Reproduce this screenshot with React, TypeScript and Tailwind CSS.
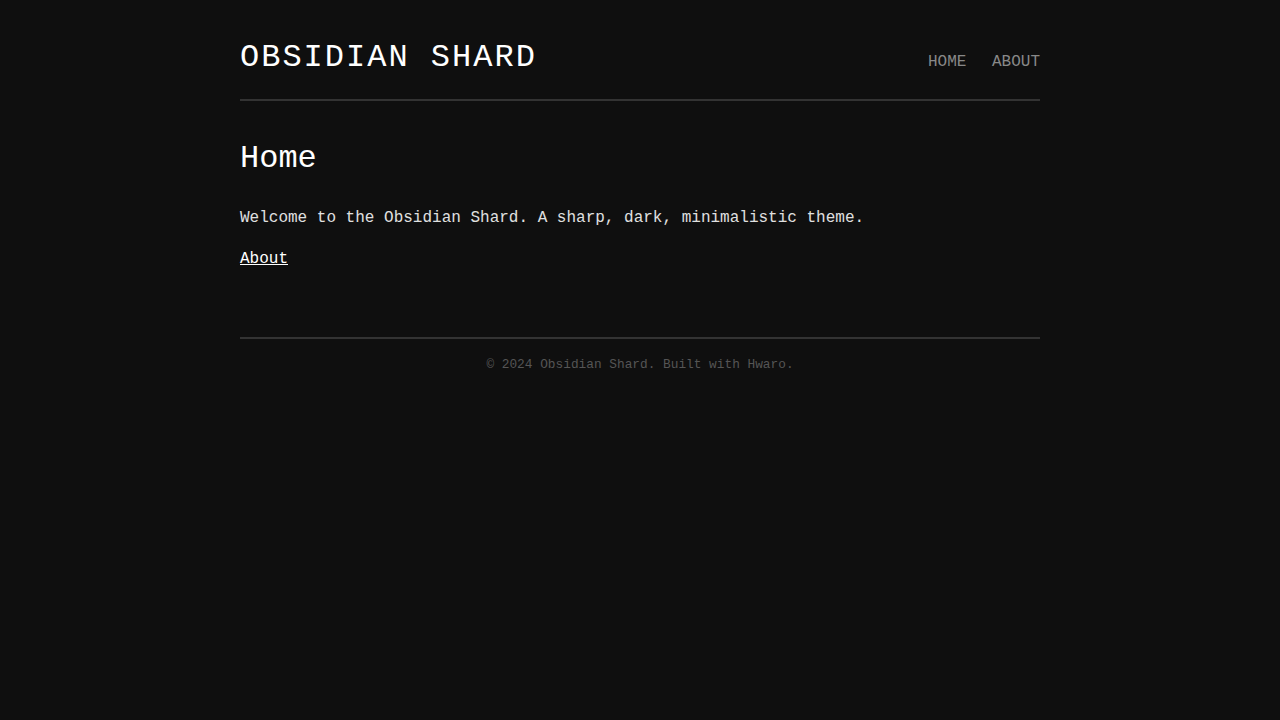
export default function App() {
  return (
    <div
      className="min-h-screen bg-[#0f0f0f] text-[#e0e0e0]"
      style={{ fontFamily: '"Liberation Mono", "DejaVu Sans Mono", monospace' }}
    >
      <div className="mx-auto w-[800px] pt-[34px]">
        <header className="flex items-baseline justify-between border-b-2 border-[#333] pb-[17px]">
          <a href="#" className="text-[32px] leading-[1.5] tracking-[2px] text-white">
            OBSIDIAN SHARD
          </a>
          <nav className="flex gap-[25.6px] text-base text-[#888]">
            <a href="#">HOME</a>
            <a href="#">ABOUT</a>
          </nav>
        </header>

        <main className="pt-[39px] pb-[64px]">
          <h1 className="mb-[28px] text-[32px] leading-[1.2] text-white">Home</h1>
          <p className="mb-[15px] text-base leading-[1.6]">
            Welcome to the Obsidian Shard. A sharp, dark, minimalistic theme.
          </p>
          <p className="text-base leading-[1.6]">
            <a href="#" className="text-white underline">
              About
            </a>
          </p>
        </main>

        <footer className="border-t-2 border-[#333] pt-[16px] text-center text-[12.8px] leading-[1.5] text-[#555]">
          © 2024 Obsidian Shard. Built with Hwaro.
        </footer>
      </div>
    </div>
  );
}
